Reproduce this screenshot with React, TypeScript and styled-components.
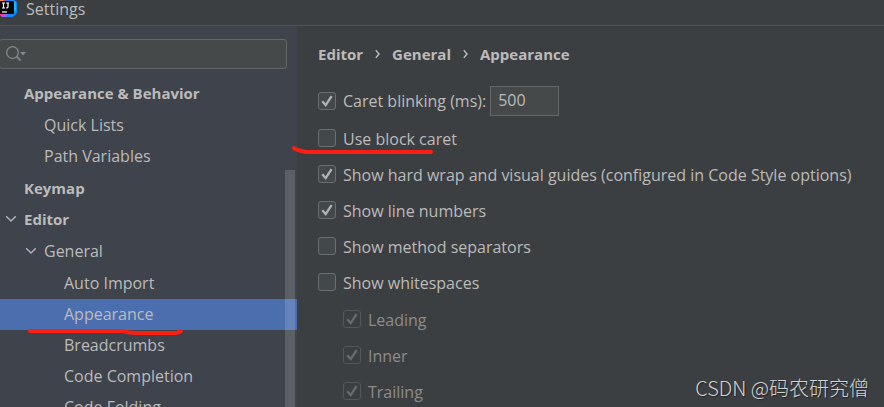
import React, { useId, useState } from "react";
import styled, { createGlobalStyle } from "styled-components";

const GlobalStyle = createGlobalStyle`
  *, *::before, *::after { box-sizing: border-box; }
  body {
    margin: 0;
    background: #3c3f41;
    color: #bbbbbb;
    font-family: "Open Sans", "Noto Sans CJK SC", sans-serif;
    font-size: 16px;
    line-height: 20px;
  }
  button, input { font: inherit; color: inherit; }
`;

const Window = styled.div`
  position: relative;
  display: flex;
  flex-direction: column;
  height: 100vh;
  overflow: hidden;
`;

const TitleBar = styled.header`
  display: flex;
  flex: none;
  align-items: center;
  gap: 8px;
  height: 26px;
  padding-bottom: 8px;
  border-bottom: 1px solid #515456;
`;

const Title = styled.h1`
  margin: 0;
  font-size: 16px;
  font-weight: 400;
  line-height: 16px;
`;

const Body = styled.div`
  display: grid;
  flex: 1;
  grid-template-columns: minmax(180px, 297px) minmax(0, 1fr);
  min-height: 0;
`;

const Sidebar = styled.aside`
  position: relative;
  overflow: hidden;
  background: #3f434c;
`;

const SearchField = styled.label`
  display: flex;
  align-items: center;
  gap: 4px;
  height: 30px;
  margin: 13px 10px 9px -1px;
  padding-left: 6px;
  border: 1px solid #646767;
  border-radius: 3px;
  background: #45494a;
`;

const SearchInput = styled.input`
  flex: 1;
  min-width: 0;
  padding: 0;
  border: 0;
  outline: 0;
  background: transparent;
`;

const TreeList = styled.ul`
  margin: 0;
  padding: 0;
  list-style: none;
`;

const SubList = styled.ul`
  margin: 0;
  padding: 1px 0;
  list-style: none;
`;

const TreeItem = styled.li`
  position: relative;
`;

const TreeRow = styled.button<{ $level: number; $selected?: boolean }>`
  display: flex;
  align-items: center;
  width: 100%;
  height: 31px;
  padding: 0 0 1px ${(p) => 4 + p.$level * 20}px;
  border: 0;
  background: ${(p) => (p.$selected ? "#4b6eaf" : "transparent")};
  font-size: ${(p) => (p.$level === 0 ? 15 : 16)}px;
  font-weight: ${(p) => (p.$level === 0 ? 700 : 400)};
  text-align: left;
  white-space: nowrap;
`;

const ArrowSlot = styled.span`
  display: flex;
  flex: none;
  width: 20px;
`;

const ScrollThumb = styled.div`
  position: absolute;
  top: 144px;
  right: 2px;
  bottom: 0;
  width: 10px;
  background: rgba(255, 255, 255, 0.15);
  pointer-events: none;
`;

const Main = styled.main`
  min-width: 0;
  padding: 17px 20px 0 21px;
`;

const Breadcrumb = styled.nav`
  display: flex;
  align-items: center;
  gap: 12px;
  height: 22px;
  margin-bottom: 16px;
  font-size: 15px;
  font-weight: 700;
`;

const OptionRow = styled.div<{ $tall?: boolean; $disabled?: boolean }>`
  position: relative;
  display: flex;
  align-items: center;
  height: ${(p) => (p.$tall ? 39 : 36)}px;
  color: ${(p) => (p.$disabled ? "#8c8c8c" : "#bbbbbb")};
  white-space: nowrap;
`;

const SubOptions = styled.div`
  padding: 1px 0 0 25px;
`;

const CheckFrame = styled.span`
  position: relative;
  display: flex;
  flex: none;
  width: 18px;
  height: 18px;
`;

const CheckInput = styled.input`
  width: 18px;
  height: 18px;
  margin: 0;
  border: 1px solid #6b6e6f;
  border-radius: 3px;
  background: #43494a;
  appearance: none;

  &:disabled {
    border-color: #545758;
    background: #3c3f41;
  }
`;

const CheckMark = styled.svg<{ $disabled?: boolean }>`
  position: absolute;
  inset: 0;
  color: ${(p) => (p.$disabled ? "#696b6c" : "#b0b2b3")};
  pointer-events: none;
`;

const OptionLabel = styled.label`
  padding: 1px 0 0 7px;
`;

const NumberField = styled.input`
  width: 69px;
  height: 30px;
  margin-left: 4px;
  padding: 0 7px 2px;
  border: 1px solid #646767;
  border-radius: 0;
  outline: 0;
  background: #45494a;
`;

const Stroke = styled.svg<{ $left: number; $top: number }>`
  position: absolute;
  z-index: 2;
  top: ${(p) => p.$top}px;
  left: ${(p) => p.$left}px;
  overflow: visible;
  fill: none;
  stroke: #fb1e12;
  stroke-width: 4;
  stroke-linecap: round;
  stroke-linejoin: round;
  pointer-events: none;
`;

const Watermark = styled.div`
  position: absolute;
  right: 15px;
  bottom: 5px;
  color: #d2d3d4;
  font-family: "Noto Sans CJK SC", sans-serif;
  font-size: 20px;
  font-weight: 300;
  line-height: 28px;
  text-shadow: 1px 1px 1px #222426;
`;

function AppLogo() {
  return (
    <svg width="18" height="18" viewBox="0 0 18 18" aria-hidden="true">
      <path d="M0 0h6v17H2L0 15z" fill="#fb3f8c" />
      <path d="M0 0h3v6H0z" fill="#fc8a3c" />
      <path d="M5 0h9l3 2v11l-4 4H5z" fill="#1486f5" />
      <path d="M13 0l3 2v8l-3 3z" fill="#18b5f6" />
      <path d="M3 14h5l-2 3H2z" fill="#a45be8" />
      <path d="M0 1h14v13H0z" fill="#080404" />
      <path d="M2 3h3M3.5 3v5M2 8h3M6 3h3M8 3v4q0 1-2 1" fill="none" stroke="#fff" strokeWidth="1.2" />
      <path d="M2 12h5" stroke="#fff" strokeWidth="1.2" />
    </svg>
  );
}

function SearchIcon() {
  return (
    <svg width="21" height="18" viewBox="0 0 21 18" fill="none" aria-hidden="true">
      <circle cx="6.5" cy="7.5" r="5.8" stroke="#858a8f" strokeWidth="1.3" />
      <path d="M10.7 11.7l4 4" stroke="#858a8f" strokeWidth="1.8" />
      <path d="M14 7h6l-3 3.5z" fill="#858a8f" />
    </svg>
  );
}

function ArrowDown() {
  return (
    <svg width="14" height="10" viewBox="0 0 14 10" fill="none" aria-hidden="true">
      <path d="M2.2 2.2L7 7l4.8-4.8" stroke="#afb1b3" strokeWidth="1.5" />
    </svg>
  );
}

function ArrowRight() {
  return (
    <svg width="5" height="10" viewBox="0 0 5 10" fill="none" aria-hidden="true">
      <path d="M.8 1.2L4 5 .8 8.8" stroke="#bbbbbb" strokeWidth="1.4" />
    </svg>
  );
}

type OptionProps = {
  label: string;
  checked?: boolean;
  disabled?: boolean;
  tall?: boolean;
  children?: React.ReactNode;
};

function Option({ label, checked = false, disabled, tall, children }: OptionProps) {
  const id = useId();
  const [on, setOn] = useState(checked);
  return (
    <OptionRow $tall={tall} $disabled={disabled}>
      <CheckFrame>
        <CheckInput
          id={id}
          type="checkbox"
          checked={on}
          disabled={disabled}
          onChange={(e) => setOn(e.target.checked)}
        />
        {on && (
          <CheckMark $disabled={disabled} width="18" height="18" viewBox="0 0 18 18" aria-hidden="true">
            <path d="M4.3 9.2l3.4 4L13.6 4.2" fill="none" stroke="currentColor" strokeWidth="2.3" />
          </CheckMark>
        )}
      </CheckFrame>
      <OptionLabel htmlFor={id}>{label}</OptionLabel>
      {children}
    </OptionRow>
  );
}

type NodeData = { label: string; open?: boolean; children?: NodeData[] };

const tree: NodeData[] = [
  { label: "Appearance & Behavior", children: [{ label: "Quick Lists" }, { label: "Path Variables" }] },
  { label: "Keymap" },
  {
    label: "Editor",
    open: true,
    children: [
      {
        label: "General",
        open: true,
        children: [
          { label: "Auto Import" },
          { label: "Appearance" },
          { label: "Breadcrumbs" },
          { label: "Code Completion" },
          { label: "Code Folding" },
        ],
      },
    ],
  },
];

function TreeNode({ node, level }: { node: NodeData; level: number }) {
  const selected = node.label === "Appearance";
  return (
    <TreeItem>
      <TreeRow type="button" $level={level} $selected={selected}>
        <ArrowSlot>{node.open && <ArrowDown />}</ArrowSlot>
        {node.label}
      </TreeRow>
      {selected && (
        <Stroke $left={28} $top={29} width="156" height="8" aria-hidden="true">
          <path d="M2 3H94Q102 5 108 5H147Q150 5 153 3" />
        </Stroke>
      )}
      {node.children && (
        <SubList>
          {node.children.map((child) => (
            <TreeNode key={child.label} node={child} level={level + 1} />
          ))}
        </SubList>
      )}
    </TreeItem>
  );
}

export default function App() {
  return (
    <Window>
      <GlobalStyle />
      <TitleBar>
        <AppLogo />
        <Title>Settings</Title>
      </TitleBar>
      <Body>
        <Sidebar>
          <SearchField>
            <SearchIcon />
            <SearchInput type="text" aria-label="Search settings" />
          </SearchField>
          <TreeList>
            {tree.map((node) => (
              <TreeNode key={node.label} node={node} level={0} />
            ))}
          </TreeList>
          <ScrollThumb />
        </Sidebar>
        <Main>
          <Breadcrumb aria-label="Breadcrumb">
            <span>Editor</span>
            <ArrowRight />
            <span>General</span>
            <ArrowRight />
            <span>Appearance</span>
          </Breadcrumb>
          <Option label="Caret blinking (ms):" checked tall>
            <NumberField type="text" defaultValue="500" aria-label="Caret blinking (ms)" />
          </Option>
          <Option label="Use block caret">
            <Stroke $left={-26} $top={26} width="142" height="8" aria-hidden="true">
              <path d="M2 2Q4 4 14 6H139" />
            </Stroke>
          </Option>
          <Option label="Show hard wrap and visual guides (configured in Code Style options)" checked />
          <Option label="Show line numbers" checked />
          <Option label="Show method separators" />
          <Option label="Show whitespaces" />
          <SubOptions>
            <Option label="Leading" checked disabled />
            <Option label="Inner" checked disabled />
            <Option label="Trailing" checked disabled />
          </SubOptions>
        </Main>
      </Body>
      <Watermark>CSDN @码农研究僧</Watermark>
    </Window>
  );
}
